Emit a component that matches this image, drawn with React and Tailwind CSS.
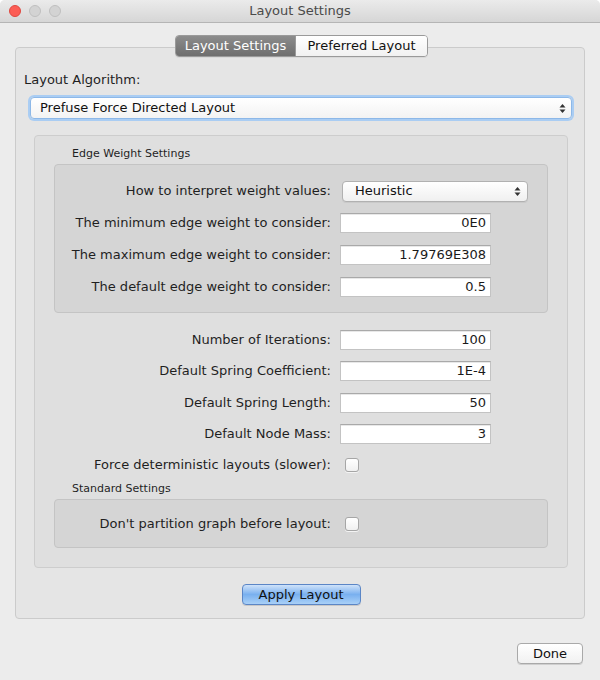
import { useState } from "react";

function Arrows() {
    return (
        <svg width="7" height="11" viewBox="0 0 7 11" className="shrink-0">
            <path d="M3.5 1 L6.5 4.5 L0.5 4.5 Z" fill="#333" />
            <path d="M3.5 10 L6.5 6.5 L0.5 6.5 Z" fill="#333" />
        </svg>
    )
}

function NumField({ value }) {
    return (
        <div className="w-[151px] h-[20px] bg-white border border-[#c3c3c3] border-t-[#a9a9a9] flex items-center justify-end pr-[4px] text-[13px] text-[#1a1a1a] shadow-[inset_0_1px_0_#e8e8e8]">
            {value}
        </div>
    )
}

function Checkbox() {
    const [on, setOn] = useState(false)
    return (
        <button
            onClick={() => setOn(!on)}
            className="w-[14px] h-[14px] rounded-[3px] border border-[#a6a6a6] bg-gradient-to-b from-white to-[#f0f0f0] shadow-[0_1px_0_#f4f4f4] flex items-center justify-center text-[10px] leading-none"
        >
            {on ? "✓" : ""}
        </button>
    )
}

function Row({ label, children, h = "h-[32px]" }) {
    return (
        <div className={`flex items-center ${h}`}>
            <div className="w-[276px] text-right text-[13px] text-[#1f1f1f] whitespace-nowrap">{label}</div>
            <div className="ml-[9px]">{children}</div>
        </div>
    )
}

export default function App() {

    const [tab, setTab] = useState(0)

    return (
        <div className="w-[600px] h-[680px] bg-[#ececec] flex flex-col overflow-hidden rounded-t-[5px] font-['DejaVu_Sans',sans-serif]">

            {/* title bar */}
            <div className="h-[23px] shrink-0 grid grid-cols-[1fr_auto_1fr] items-center bg-gradient-to-b from-[#ebebeb] to-[#d6d6d6] border-b border-[#b5b5b5]">
                <div className="flex items-center gap-[8px] pl-[9px]">
                    <span className="w-[12px] h-[12px] rounded-full bg-[#fc5d55] border border-[#de4840]"></span>
                    <span className="w-[12px] h-[12px] rounded-full bg-[#d3d3d3] border border-[#bfbfbf]"></span>
                    <span className="w-[12px] h-[12px] rounded-full bg-[#d3d3d3] border border-[#bfbfbf]"></span>
                </div>
                <div className="text-[13px] text-[#4a4a4a]">Layout Settings</div>
                <div></div>
            </div>

            <div className="flex-1 flex flex-col px-[15px] pt-[12px]">

                {/* tabs */}
                <div className="relative z-10 flex justify-center -mb-[10px] pl-[3px]">
                    <div className="flex h-[22px] rounded-[4px] border border-[#9a9a9a] overflow-hidden shadow-[0_1px_0_#d9d9d9]">
                        <button
                            onClick={() => setTab(0)}
                            className={`w-[119px] text-[13px] ${tab === 0 ? "bg-gradient-to-b from-[#8c8c8c] to-[#6e6e6e] text-white" : "bg-gradient-to-b from-white to-[#f1f1f1] text-[#111]"}`}
                        >
                            Layout Settings
                        </button>
                        <div className="w-px bg-[#9a9a9a]"></div>
                        <button
                            onClick={() => setTab(1)}
                            className={`w-[131px] text-[13px] ${tab === 1 ? "bg-gradient-to-b from-[#8c8c8c] to-[#6e6e6e] text-white" : "bg-gradient-to-b from-white to-[#f1f1f1] text-[#111]"}`}
                        >
                            Preferred Layout
                        </button>
                    </div>
                </div>

                {/* tab pane */}
                <div className="h-[572px] rounded-[4px] border border-[#cbcbcb] bg-[#e5e5e5] flex flex-col pt-[24px]">

                    <div className="pl-[8px] text-[13px] text-[#1f1f1f] leading-[16px]">Layout Algorithm:</div>

                    <div className="ml-[14px] mr-[12px] mt-[9px] h-[22px] rounded-[4px] border border-[#8db8e8] shadow-[0_0_0_2px_#aacdf3] bg-gradient-to-b from-white to-[#f3f3f3] flex items-center justify-between pl-[9px] pr-[5px] text-[13px] text-[#111]">
                        <span>Prefuse Force Directed Layout</span>
                        <Arrows />
                    </div>

                    {/* settings panel */}
                    <div className="ml-[18px] mr-[16px] mt-[16px] h-[433px] rounded-[4px] border border-[#cdcdcd] bg-[#dfdfdf] flex flex-col pt-[11px]">

                        <div className="pl-[37px] text-[11px] leading-[14px] text-[#1f1f1f]">Edge Weight Settings</div>

                        <div className="mx-[19px] mt-[3px] rounded-[4px] border border-[#c4c4c4] bg-[#d5d5d5] pt-[10px] pb-[9px]">
                            <Row label="How to interpret weight values:">
                                <div className="ml-[2px] w-[186px] h-[21px] rounded-[4px] border border-[#b1b1b1] bg-gradient-to-b from-white to-[#f0f0f0] shadow-[0_1px_0_#c9c9c9] flex items-center justify-between pl-[12px] pr-[6px] text-[13px] text-[#111]">
                                    <span>Heuristic</span>
                                    <Arrows />
                                </div>
                            </Row>
                            <Row label="The minimum edge weight to consider:"><NumField value="0E0" /></Row>
                            <Row label="The maximum edge weight to consider:"><NumField value="1.79769E308" /></Row>
                            <Row label="The default edge weight to consider:"><NumField value="0.5" /></Row>
                        </div>

                        <div className="mt-[11px] pl-[20px]">
                            <Row label="Number of Iterations:" h="h-[31px]"><NumField value="100" /></Row>
                            <Row label="Default Spring Coefficient:" h="h-[32px]"><NumField value="1E-4" /></Row>
                            <Row label="Default Spring Length:" h="h-[31px]"><NumField value="50" /></Row>
                            <Row label="Default Node Mass:" h="h-[32px]"><NumField value="3" /></Row>
                            <Row label="Force deterministic layouts (slower):" h="h-[30px]">
                                <div className="pl-[5px]"><Checkbox /></div>
                            </Row>
                        </div>

                        <div className="pl-[37px] mt-[2px] text-[11px] leading-[14px] text-[#1f1f1f]">Standard Settings</div>

                        <div className="mx-[19px] mt-[3px] h-[49px] rounded-[4px] border border-[#c4c4c4] bg-[#d5d5d5] flex items-center">
                            <Row label="Don't partition graph before layout:" h="h-[30px]">
                                <div className="pl-[5px]"><Checkbox /></div>
                            </Row>
                        </div>
                    </div>

                    <div className="flex justify-center mt-[16px] pl-[2px]">
                        <button className="w-[119px] h-[21px] rounded-[4px] border border-[#5b86c6] bg-gradient-to-b from-[#cfe2f9] via-[#79b0ef] to-[#a9d0f7] text-[13px] text-[#111] shadow-[0_1px_0_#c8c8c8]">
                            Apply Layout
                        </button>
                    </div>
                </div>

                <div className="flex justify-end mt-[24px] mr-[2px]">
                    <button className="w-[66px] h-[21px] rounded-[4px] border border-[#a9a9a9] bg-gradient-to-b from-white to-[#f1f1f1] text-[13px] text-[#111] shadow-[0_1px_0_#cfcfcf]">
                        Done
                    </button>
                </div>
            </div>
        </div>
    )
}
